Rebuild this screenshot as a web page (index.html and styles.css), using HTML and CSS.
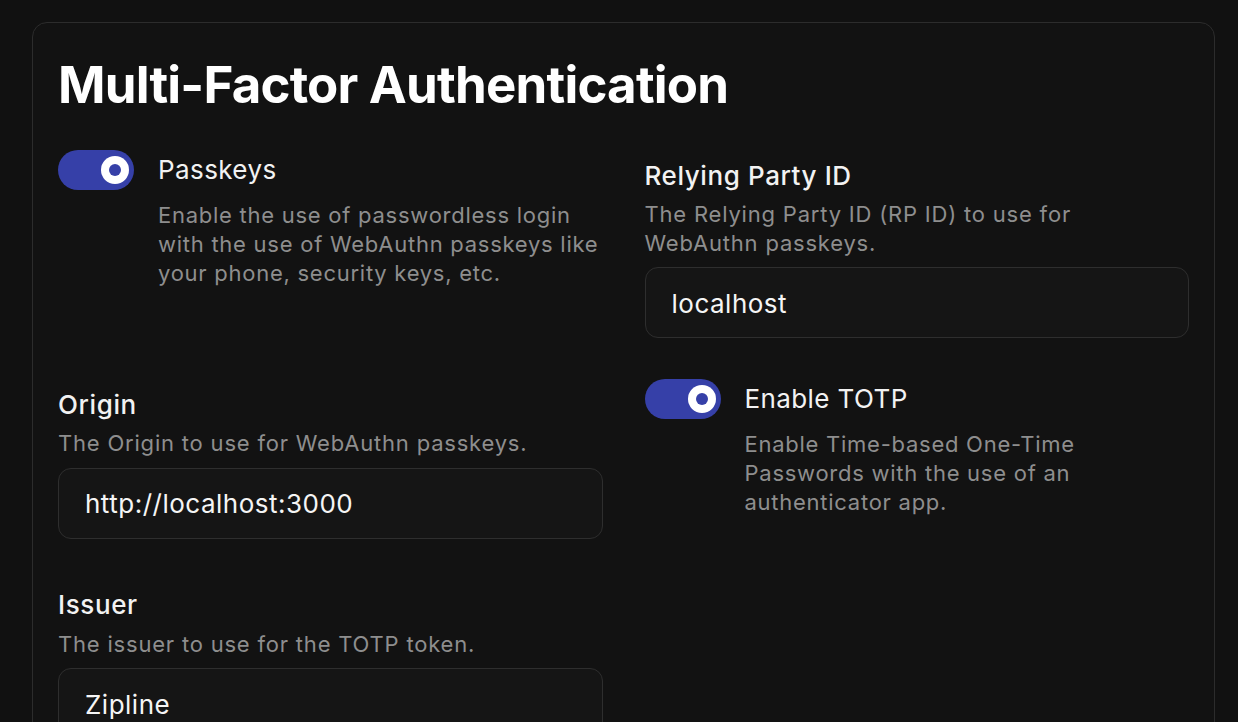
FILE: index.html
```html
<!DOCTYPE html>
<html lang="en">
<head>
<meta charset="utf-8">
<title>Multi-Factor Authentication</title>
<link rel="stylesheet" href="styles.css">
</head>
<body>
<div class="card">
  <h1 class="title">Multi-Factor Authentication</h1>
  <div class="grid">
    <div class="switch-field">
      <div class="switch on"><span class="thumb"><span class="dot"></span></span></div>
      <div class="switch-text">
        <div class="switch-label">Passkeys</div>
        <div class="switch-desc">Enable the use of passwordless login with the use of WebAuthn passkeys like your phone, security keys, etc.</div>
      </div>
    </div>
    <div class="text-field">
      <label class="field-label">Relying Party ID</label>
      <div class="field-desc">The Relying Party ID (RP ID) to use for WebAuthn passkeys.</div>
      <div class="input">localhost</div>
    </div>
    <div class="text-field">
      <label class="field-label">Origin</label>
      <div class="field-desc">The Origin to use for WebAuthn passkeys.</div>
      <div class="input">http://localhost:3000</div>
    </div>
    <div class="switch-field">
      <div class="switch on"><span class="thumb"><span class="dot"></span></span></div>
      <div class="switch-text">
        <div class="switch-label">Enable TOTP</div>
        <div class="switch-desc narrow">Enable Time-based One-Time Passwords with the use of an authenticator app.</div>
      </div>
    </div>
    <div class="text-field">
      <label class="field-label">Issuer</label>
      <div class="field-desc">The issuer to use for the TOTP token.</div>
      <div class="input">Zipline</div>
    </div>
  </div>
</div>
</body>
</html>
```

FILE: styles.css
```css
html, body {
  margin: 0;
  padding: 0;
  background: #111111;
}
body {
  font-family: Inter, "Liberation Sans", sans-serif;
  color: #ffffff;
  padding: 22px 23px 0 32px;
  height: 722px;
  overflow: hidden;
  box-sizing: border-box;
}
.card {
  border: 1.5px solid #2c2c2c;
  border-radius: 15px;
  background: #121212;
  padding: 29px 25px 40px 25px;
  min-height: 900px;
}
.title {
  margin: 0;
  font-size: 51px;
  font-weight: 700;
  line-height: 66px;
  letter-spacing: -0.8px;
  color: #ffffff;
}
.grid {
  margin-top: 32px;
  display: grid;
  grid-template-columns: 1fr 1fr;
  column-gap: 42px;
  row-gap: 40.5px;
  align-items: start;
}
.switch-field {
  display: flex;
  align-items: flex-start;
  gap: 24px;
}
.switch {
  flex: none;
  width: 76px;
  height: 40px;
  border-radius: 20px;
  background: #3640a8;
  position: relative;
}
.thumb {
  position: absolute;
  top: 6px;
  right: 5px;
  width: 28px;
  height: 28px;
  border-radius: 50%;
  background: #ffffff;
  display: flex;
  align-items: center;
  justify-content: center;
}
.dot {
  width: 12px;
  height: 12px;
  border-radius: 50%;
  background: #3640a8;
}
.switch-text {
  display: flex;
  flex-direction: column;
}
.switch-label {
  font-size: 26px;
  line-height: 40px;
  letter-spacing: 0.4px;
  color: #f2f2f2;
}
.switch-desc {
  margin-top: 11px;
  font-size: 22px;
  line-height: 28.8px;
  letter-spacing: 0.74px;
  color: #8e8e8e;
}
.text-field {
  padding-top: 8px;
  display: flex;
  flex-direction: column;
}
.field-label {
  font-size: 26px;
  font-weight: 500;
  line-height: 36.4px;
  letter-spacing: 0.6px;
  color: #f2f2f2;
}
.field-desc {
  margin-top: 6px;
  font-size: 22px;
  line-height: 28.5px;
  letter-spacing: 0.8px;
  color: #8e8e8e;
}
.input {
  margin-top: 10px;
  height: 71px;
  box-sizing: border-box;
  border: 1.5px solid #2e2e2e;
  border-radius: 13px;
  background: #151515;
  padding: 1px 26px 0 26px;
  display: flex;
  align-items: center;
  font-size: 26px;
  letter-spacing: 0.5px;
  color: #f5f5f5;
}
```
